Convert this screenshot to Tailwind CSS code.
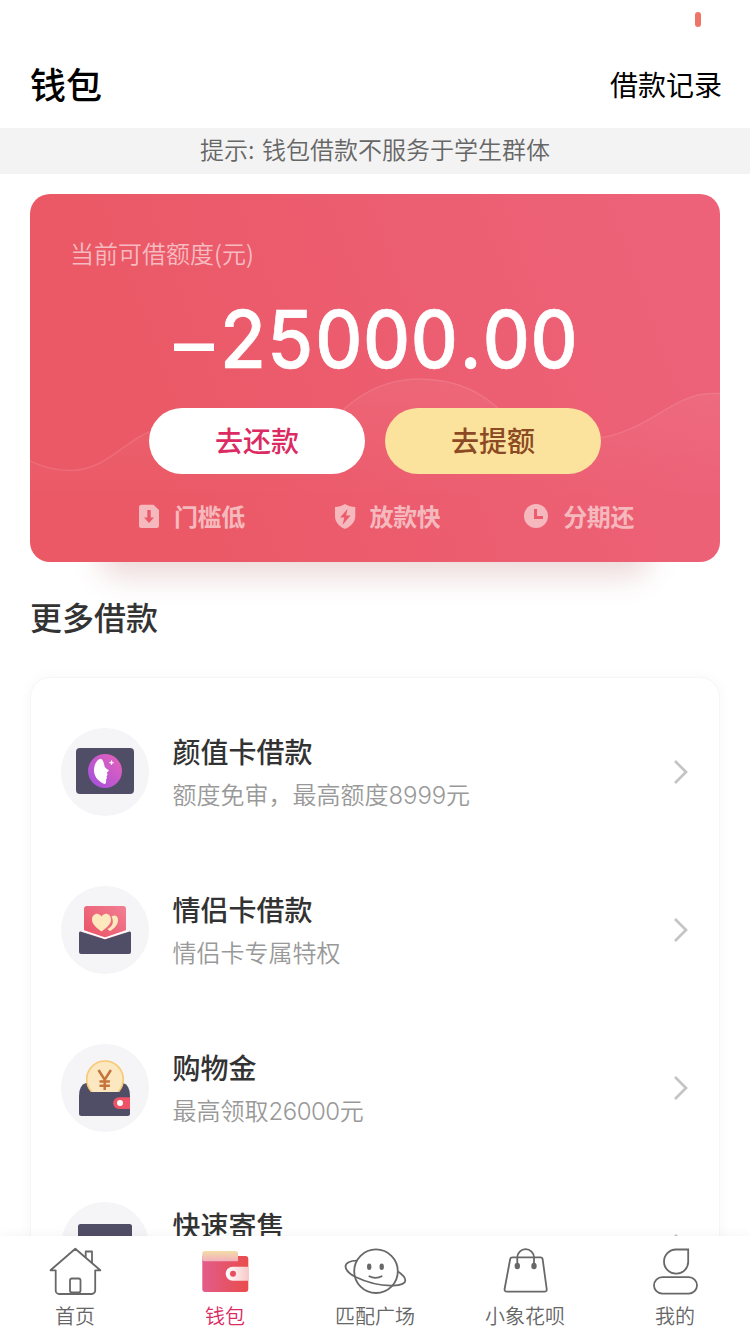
<!DOCTYPE html>
<html lang="zh-CN">
<head>
<meta charset="utf-8">
<title>钱包</title>
<script src="https://cdn.jsdelivr.net/npm/@tailwindcss/browser@4"></script>
</head>
<body class="bg-white">
<div class="flex h-[1334px] w-[750px] flex-col overflow-hidden bg-white font-['Inter','Noto_Sans_CJK_SC',sans-serif]">
  <main class="flex min-h-0 flex-1 flex-col overflow-hidden">
    <div class="flex h-10 shrink-0 justify-end pt-3 pr-[49px]"><div class="h-[15px] w-[6px] rounded-full bg-[#ee7468]"></div></div>
    <header class="flex h-[88px] shrink-0 items-center justify-between pr-7 pl-[30px]">
      <h1 class="pt-1 text-[36px] leading-[84px] font-medium text-black">钱包</h1>
      <span class="pt-[4px] text-[28px] leading-[84px] text-black">借款记录</span>
    </header>
    <div class="h-[46px] shrink-0 bg-[#f3f3f3] text-center font-['Noto_Sans_CJK_SC',sans-serif] text-[24px] leading-[42px] font-[350] text-[#666] [word-spacing:2px]">提示: 钱包借款不服务于学生群体</div>

    <section class="relative mx-[30px] mt-5 h-[368px] shrink-0">
      <div class="absolute right-[70px] bottom-0 left-[70px] h-20 rounded-[20px] shadow-[0_14px_30px_rgba(160,60,60,0.2)]"></div>
      <div class="relative flex h-full flex-col overflow-hidden rounded-[20px] bg-[linear-gradient(70deg,#eb5966_20%,#ec5d70_55%,#ed6278_90%)]">
        <svg class="absolute inset-0" width="690" height="368" viewBox="30 194 690 368" fill="none">
          <defs><linearGradient id="wv" x1="0" y1="378" x2="0" y2="500" gradientUnits="userSpaceOnUse"><stop stop-color="#fff" stop-opacity=".06"/><stop offset="1" stop-color="#fff" stop-opacity="0"/></linearGradient></defs>
          <path d="M28 460C44 468 58 470.500 70 470.500C105 470.500 125 441 149 432C170 424 200 430 250 440L330 424C345 405 375 379 419 379C462 379 485 396 500 410C530 436 570 440 605 437C650 428 675 394 710 393.500H722V562H28Z" fill="url(#wv)"/>
          <path d="M28 460C44 468 58 470.500 70 470.500C105 470.500 125 441 149 432M330 424C345 405 375 379 419 379C462 379 485 396 500 410C530 436 570 440 605 437C650 428 675 394 710 393.500H722" stroke="#fff" stroke-opacity=".11" stroke-width="1.500"/>
        </svg>
        <div class="relative mt-[39px] pl-10 font-['Noto_Sans_CJK_SC',sans-serif] text-[24px] leading-10 font-[350] text-white/60">当前可借额度(元)</div>
        <div class="relative mt-[16px] flex h-[100px] justify-center pl-[5px] text-[80px] leading-[100px] font-medium text-white">
          <span class="w-[45px] pt-1">–</span>
          <span class="w-[362px] origin-left scale-x-[0.93] tracking-[-0.4px] whitespace-nowrap tabular-nums [-webkit-text-stroke:0.7px_white]">25000<span class="px-[2.4px]">.</span>00</span>
        </div>
        <div class="relative mt-[19px] flex justify-center gap-5">
          <button class="h-[66px] w-[216px] rounded-full bg-white text-[28px] leading-[66px] font-medium text-[#dc2b62]"><span class="block pt-px">去还款</span></button>
          <button class="h-[66px] w-[216px] rounded-full bg-[#fbe39e] text-[28px] leading-[66px] font-medium text-[#8b4a23]"><span class="block pt-px">去提额</span></button>
        </div>
        <div class="relative mt-[22px] flex h-10 justify-between pr-[86px] pl-[106px] text-[24px] leading-10 font-bold text-[#f5b9bd]">
          <div class="flex items-center gap-[12px]">
            <svg width="26" height="28" viewBox="136 503 26 28"><path d="M141.500 505.700H153.500L159 511V526.500a2.500 2.500 0 0 1-2.500 2.500H141.500a2.500 2.500 0 0 1-2.500-2.500V508.200a2.500 2.500 0 0 1 2.500-2.500Z" fill="#f5b9bd"/><path d="M147.300 511h3.400v7.500h3.300L149 524l-5-5.500h3.300Z" fill="#eb5a68"/></svg>
            <span class="pt-1 tracking-[-0.4px]">门槛低</span>
          </div>
          <div class="flex items-center gap-[12px] pl-[5px]">
            <svg width="26" height="28" viewBox="332 502 26 28"><path d="M345 504C348 506 351.500 507 355.300 507V516C355.300 522 351 526.500 345 529C339 526.500 335 522 335 516V507C338.500 507 342 506 345 504Z" fill="#f5b9bd"/><path d="M347.500 509L340 517.500h4.300L342.500 525 350.500 515.500h-4.300Z" fill="#eb5d6c"/></svg>
            <span class="pt-1 tracking-[-0.4px]">放款快</span>
          </div>
          <div class="flex items-center gap-[13px]">
            <svg width="28" height="28" viewBox="522 502 28 28"><circle cx="536" cy="516" r="12" fill="#f5b9bd"/><path d="M535.500 509V517.500H543" stroke="#eb5d6e" stroke-width="3" fill="none"/></svg>
            <span class="pt-1 tracking-[-0.4px]">分期还</span>
          </div>
        </div>
      </div>
    </section>

    <h2 class="relative mt-[33px] shrink-0 pl-[30px] text-[32px] leading-[48px] font-medium text-[#333]">更多借款</h2>

    <section class="mx-[30px] mt-[34px] flex h-[700px] shrink-0 flex-col gap-[70px] rounded-[20px] border border-[#f6f6f6] bg-white pt-[50px] pr-[30px] pl-[30px] shadow-[0_0_14px_rgba(0,0,0,0.035)]">
      <div class="flex h-[88px] shrink-0">
        <svg class="shrink-0" width="88" height="88" viewBox="61 728 88 88">
          <defs><linearGradient id="face" x1="0" y1="1" x2="1" y2="0"><stop stop-color="#a04fe0"/><stop offset="1" stop-color="#ea62b8"/></linearGradient></defs>
          <circle cx="105" cy="772" r="44" fill="#f5f5f8"/><rect x="76" y="748" width="58" height="46" rx="4" fill="#504d66"/><circle cx="105" cy="771" r="17" fill="url(#face)"/>
          <path d="M101 758.700C103 759.500 104 763 104.600 766.500C105.500 768.500 107.500 769 109 770.500C108.300 771.500 107.300 771.800 107 772.500L107.500 775L106.500 776.500L107 778L106 779.500C106.500 782 106 784 104.500 784C98 781.500 94 776 94 770.500C94 764 97.500 758.500 101 758.700Z" fill="#fff"/><path d="M111.500 760.500l.6 1.600 1.600.6-1.600.6-.6 1.600-.6-1.600-1.600-.6 1.600-.6Z" fill="#fff" stroke="#fff" stroke-width=".5"/>
        </svg>
        <div class="ml-[23.500px] flex-1"><div class="mt-[5px] text-[28px] leading-10 font-medium text-[#333]">颜值卡借款</div><div class="mt-[3px] text-[24px] leading-10 font-[350] text-[#999]">额度免审，最高额度<span class="font-light tracking-[-0.1px]">8999</span>元</div></div>
        <svg class="mt-8 shrink-0" width="16" height="24" viewBox="0 0 16 24" fill="none" stroke="#c4c4c6" stroke-width="2.700"><path d="M2 1L13 12 2 23"/></svg>
      </div>
      <div class="flex h-[88px] shrink-0">
        <svg class="shrink-0" width="88" height="88" viewBox="61 886 88 88">
          <defs><linearGradient id="red" x1="0" y1="1" x2="1" y2="0"><stop stop-color="#ea4f63"/><stop offset="1" stop-color="#f17f93"/></linearGradient></defs>
          <circle cx="105" cy="930" r="44" fill="#f5f5f8"/><path d="M87 906H123a3 3 0 0 1 3 3V932L105 940 84 932V909a3 3 0 0 1 3-3Z" fill="url(#red)"/>
          <path d="M110 931.200C117 926.500 118 923 118 920C118 916 115 914.500 111.500 916.500C114.500 922 112.500 926.500 107.500 929Z" fill="#fde9bd"/>
          <path d="M101.500 931.500C95 927 92 923.500 92 919.500C92 913.500 98.500 911.500 101.500 916.500C104.500 911.500 111 913.500 111 919.500C111 923.500 108 927 101.500 931.500Z" fill="#fde9bd"/>
          <path d="M80.500 931.500L105 939.300 129.500 931.500Q131 931.200 131 933V952a2 2 0 0 1-2 2H81a2 2 0 0 1-2-2V933Q79 931.200 80.500 931.500Z" fill="#504d66"/><path d="M83 930.800L105 938.300 127 930.800" stroke="#fff" stroke-width="1.800" fill="none"/>
        </svg>
        <div class="ml-[23.500px] flex-1"><div class="mt-[5px] text-[28px] leading-10 font-medium text-[#333]">情侣卡借款</div><div class="mt-[3px] text-[24px] leading-10 font-[350] text-[#999]">情侣卡专属特权</div></div>
        <svg class="mt-8 shrink-0" width="16" height="24" viewBox="0 0 16 24" fill="none" stroke="#c4c4c6" stroke-width="2.700"><path d="M2 1L13 12 2 23"/></svg>
      </div>
      <div class="flex h-[88px] shrink-0">
        <svg class="shrink-0" width="88" height="88" viewBox="61 1044 88 88">
          <circle cx="105" cy="1088" r="44" fill="#f5f5f8"/><path d="M79 1096Q79 1085 86 1083H123Q130 1085 130 1096V1113.500a2.500 2.500 0 0 1-2.500 2.500H81.500a2.500 2.500 0 0 1-2.500-2.500Z" fill="#504d66"/>
          <path d="M91.500 1092A18.300 18.300 0 1 1 118.500 1092Z" fill="#fbe8c0"/><path d="M91.300 1091.500A18.300 18.300 0 1 1 118.700 1091.500" fill="none" stroke="#f8c873" stroke-width="1.600"/>
          <path d="M98.500 1070l6.200 9.700 6.200-9.700M104.700 1079.700V1090M99.500 1081.500h10.400M99.500 1085.800h10.400" fill="none" stroke="#c5743c" stroke-width="2.500"/>
          <path d="M119 1097.300H130V1109H119a5.850 5.850 0 0 1 0-11.700Z" fill="#ed5267"/><circle cx="120" cy="1103" r="3" fill="#fff"/>
        </svg>
        <div class="ml-[23.500px] flex-1"><div class="mt-[5px] text-[28px] leading-10 font-medium text-[#333]">购物金</div><div class="mt-[3px] text-[24px] leading-10 font-[350] text-[#999]">最高领取<span class="font-light tracking-[-0.5px]">26000</span>元</div></div>
        <svg class="mt-8 shrink-0" width="16" height="24" viewBox="0 0 16 24" fill="none" stroke="#c4c4c6" stroke-width="2.700"><path d="M2 1L13 12 2 23"/></svg>
      </div>
      <div class="flex h-[88px] shrink-0">
        <svg class="shrink-0" width="88" height="88" viewBox="61 1202 88 88"><circle cx="105" cy="1246" r="44" fill="#f5f5f8"/><rect x="78" y="1224" width="54" height="46" rx="2.500" fill="#504d66"/></svg>
        <div class="ml-[23.500px] flex-1 text-[28px] leading-10 font-medium text-[#333]"><div class="mt-[5px]">快速寄售</div></div>
        <svg class="mt-8 shrink-0" width="16" height="24" viewBox="0 0 16 24" fill="none" stroke="#c4c4c6" stroke-width="2.700"><path d="M2 1L13 12 2 23"/></svg>
      </div>
    </section>
  </main>

  <nav class="relative grid h-[98px] shrink-0 grid-cols-5 bg-white text-center text-[20px] leading-[30px] font-[350] text-[#666] shadow-[0_0_12px_rgba(0,0,0,0.05)]">
    <div class="flex flex-col items-center pt-[9px]">
      <svg width="60" height="54" viewBox="45 1245 60 54" fill="none" stroke="#686868" stroke-width="1.800" stroke-linejoin="round"><path d="M55.700 1270.300H50.500L75.300 1248.700 100.300 1270.300H95.200V1290.500a3.500 3.500 0 0 1-3.500 3.500H59.200a3.500 3.500 0 0 1-3.500-3.500Z"/><path d="M85.700 1257.500V1251.500H92V1263"/><rect x="70" y="1278.500" width="10.500" height="14" rx="2"/></svg>
      <span class="mt-[3px]">首页</span>
    </div>
    <div class="flex flex-col items-center pt-[9px] text-[#dc2b62]">
      <svg width="60" height="54" viewBox="195 1245 60 54">
        <defs><linearGradient id="w1"><stop stop-color="#e25c8a"/><stop offset="1" stop-color="#e94c4c"/></linearGradient><linearGradient id="w2" x2="0" y2="1"><stop stop-color="#f4dca8"/><stop offset="1" stop-color="#f3afbc"/></linearGradient><linearGradient id="w3"><stop stop-color="#fff"/><stop offset="1" stop-color="#f8c9c9"/></linearGradient></defs>
        <path d="M202.300 1256H245.300a3 3 0 0 1 3 3V1289a3 3 0 0 1-3 3H205.300a3 3 0 0 1-3-3Z" fill="url(#w1)"/><path d="M204.800 1251H235.500a2.500 2.500 0 0 1 2.500 2.500V1261.300H204.300a2 2 0 0 1-2-2V1253.500a2.500 2.500 0 0 1 2.500-2.500Z" fill="url(#w2)"/><path d="M232.700 1266.700H248.300V1280.700H232.700a7 7 0 0 1 0-14Z" fill="url(#w3)"/><circle cx="233" cy="1273.700" r="3" fill="#e54f60"/>
      </svg>
      <span class="mt-[3px]">钱包</span>
    </div>
    <div class="flex flex-col items-center pt-[9px]">
      <svg width="66" height="54" viewBox="342 1245 66 54" fill="none" stroke="#686868" stroke-width="1.800"><circle cx="376" cy="1271.200" r="21.800"/><path d="M357.500 1260.700C350 1260.500 345.500 1263 345.500 1266.500C345.500 1271 350 1274 355 1276.800C367 1282.500 381 1286 393 1285.600C401 1285.200 405.300 1283.500 405.300 1280.500C405.300 1277.500 402.500 1274.500 398 1271.500"/><path d="M368.700 1276Q375.500 1279.800 382.300 1276"/><ellipse cx="369.200" cy="1266.700" rx="2.200" ry="3.200" fill="#686868" stroke="none"/><ellipse cx="381.700" cy="1266.700" rx="2.200" ry="3.200" fill="#686868" stroke="none"/></svg>
      <span class="mt-[3px]">匹配广场</span>
    </div>
    <div class="flex flex-col items-center pt-[9px]">
      <svg width="60" height="54" viewBox="495 1245 60 54" fill="none" stroke="#686868" stroke-width="1.800"><path d="M512.500 1257.300H540.500Q542.300 1257.300 542.600 1259L546.700 1289Q547 1291.700 544.500 1291.700H507Q504.300 1291.700 504.600 1289L510.200 1259Q510.500 1257.300 512.500 1257.300Z"/><path d="M517.300 1266V1257.500a8.350 8.350 0 0 1 16.700 0V1266"/><ellipse cx="517.300" cy="1266" rx="2.700" ry="3.300" fill="#686868" stroke="none"/><ellipse cx="534" cy="1266" rx="2.700" ry="3.300" fill="#686868" stroke="none"/></svg>
      <span class="mt-[3px]">小象花呗</span>
    </div>
    <div class="flex flex-col items-center pt-[9px]">
      <svg width="60" height="54" viewBox="645.500 1245 60 54" fill="none" stroke="#686868" stroke-width="1.800"><path d="M676.500 1249.500H688.700V1261a12.100 12.100 0 1 1-12.200-11.500Z"/><rect x="654.500" y="1277.200" width="43" height="16.400" rx="8.200"/></svg>
      <span class="mt-[3px]">我的</span>
    </div>
  </nav>
</div>
</body>
</html>
